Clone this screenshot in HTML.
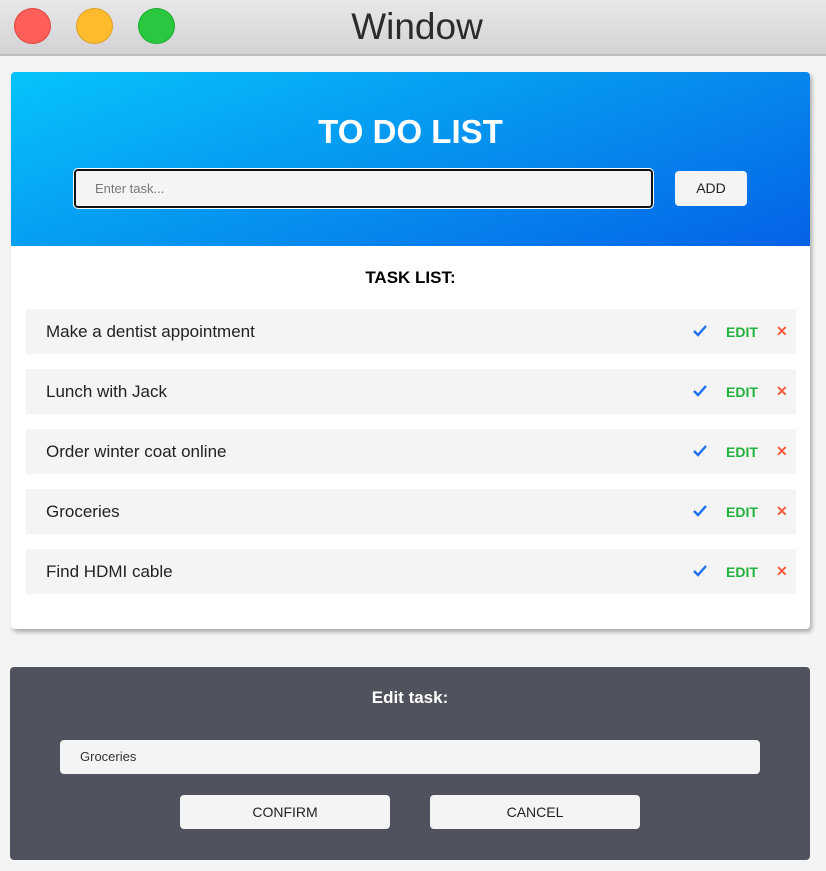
<!DOCTYPE html>
<html><head><style>
*{margin:0;padding:0;box-sizing:border-box}
body{width:826px;height:871px;background:#f4f4f4;font-family:"Liberation Sans",sans-serif;position:relative;overflow:hidden}
.tb{position:absolute;left:0;top:0;width:826px;height:56px;background:linear-gradient(#e8e7ea,#d3d2d5);border-bottom:2px solid #bdbdbd}
.dot{position:absolute;top:8px;width:37px;height:36px;border-radius:50%}
.tt{position:absolute;left:0;width:834px;top:6px;text-align:center;font-size:37px;color:#2b2b2b}
.card{position:absolute;left:11px;top:72px;width:799px;height:557px;background:#fff;border-radius:4px;box-shadow:2px 3px 4px rgba(0,0,0,.3);overflow:hidden}
.hd{height:174px;background:linear-gradient(160deg,#06c4fa,#0562e6)}
.h1{position:absolute;top:41px;left:0;width:799px;text-align:center;color:#fff;font-size:33px;font-weight:bold}
.in{position:absolute;left:63px;top:97px;width:579px;height:39px;border:2px solid #111;border-radius:4px;background:#f4f4f4;outline:1px solid #fff;font-size:13px;color:#777;padding:10px 19px}
.btn{position:absolute;background:#f4f4f4;border-radius:4px;font-size:14px;color:#222;text-align:center}
.tl{position:absolute;top:196px;width:799px;text-align:center;font-weight:bold;font-size:17px}
.it{position:absolute;left:15px;width:770px;height:45px;background:#f4f4f4;font-size:17px;color:#222;padding:13px 20px}
.ck{position:absolute;left:667px;top:16px}
.ed{position:absolute;left:700px;top:15px;color:#1fb23c;font-size:14px;font-weight:bold}
.x{position:absolute;left:750px;top:14px;color:#f45a3c;font-size:14px;font-weight:bold}
.ep{position:absolute;left:10px;top:667px;width:800px;height:193px;background:#50525d;border-radius:4px}
</style></head><body>
<div class="tb">
<div class="dot" style="left:14px;background:#fe5f58;border:1px solid #e0443e"></div>
<div class="dot" style="left:76px;background:#febb2e;border:1px solid #dea123"></div>
<div class="dot" style="left:138px;background:#29c840;border:1px solid #1aab29"></div>
<div class="tt">Window</div>
</div>
<div class="card">
<div class="hd"></div>
<div class="h1">TO DO LIST</div>
<div class="in">Enter task...</div>
<div class="btn" style="left:664px;top:99px;width:72px;height:35px;line-height:35px">ADD</div>
<div class="tl">TASK LIST:</div>
<div class="it" style="top:237px">Make a dentist appointment<svg class="ck" width="14" height="12" viewBox="0 0 14 12"><path d="M1 6l4 4 8-9" stroke="#1e6ff0" stroke-width="2.4" fill="none"/></svg><span class="ed">EDIT</span><span class="x">✕</span></div>
<div class="it" style="top:297px">Lunch with Jack<svg class="ck" width="14" height="12" viewBox="0 0 14 12"><path d="M1 6l4 4 8-9" stroke="#1e6ff0" stroke-width="2.4" fill="none"/></svg><span class="ed">EDIT</span><span class="x">✕</span></div>
<div class="it" style="top:357px">Order winter coat online<svg class="ck" width="14" height="12" viewBox="0 0 14 12"><path d="M1 6l4 4 8-9" stroke="#1e6ff0" stroke-width="2.4" fill="none"/></svg><span class="ed">EDIT</span><span class="x">✕</span></div>
<div class="it" style="top:417px">Groceries<svg class="ck" width="14" height="12" viewBox="0 0 14 12"><path d="M1 6l4 4 8-9" stroke="#1e6ff0" stroke-width="2.4" fill="none"/></svg><span class="ed">EDIT</span><span class="x">✕</span></div>
<div class="it" style="top:477px">Find HDMI cable<svg class="ck" width="14" height="12" viewBox="0 0 14 12"><path d="M1 6l4 4 8-9" stroke="#1e6ff0" stroke-width="2.4" fill="none"/></svg><span class="ed">EDIT</span><span class="x">✕</span></div>
</div>
<div class="ep">
<div style="position:absolute;top:21px;width:800px;text-align:center;color:#fff;font-weight:bold;font-size:17px">Edit task:</div>
<div style="position:absolute;left:50px;top:73px;width:700px;height:34px;background:#f4f4f4;border-radius:4px;font-size:13px;color:#333;padding:9px 20px">Groceries</div>
<div class="btn" style="left:170px;top:128px;width:210px;height:34px;line-height:34px">CONFIRM</div>
<div class="btn" style="left:420px;top:128px;width:210px;height:34px;line-height:34px">CANCEL</div>
</div>
</body></html>
